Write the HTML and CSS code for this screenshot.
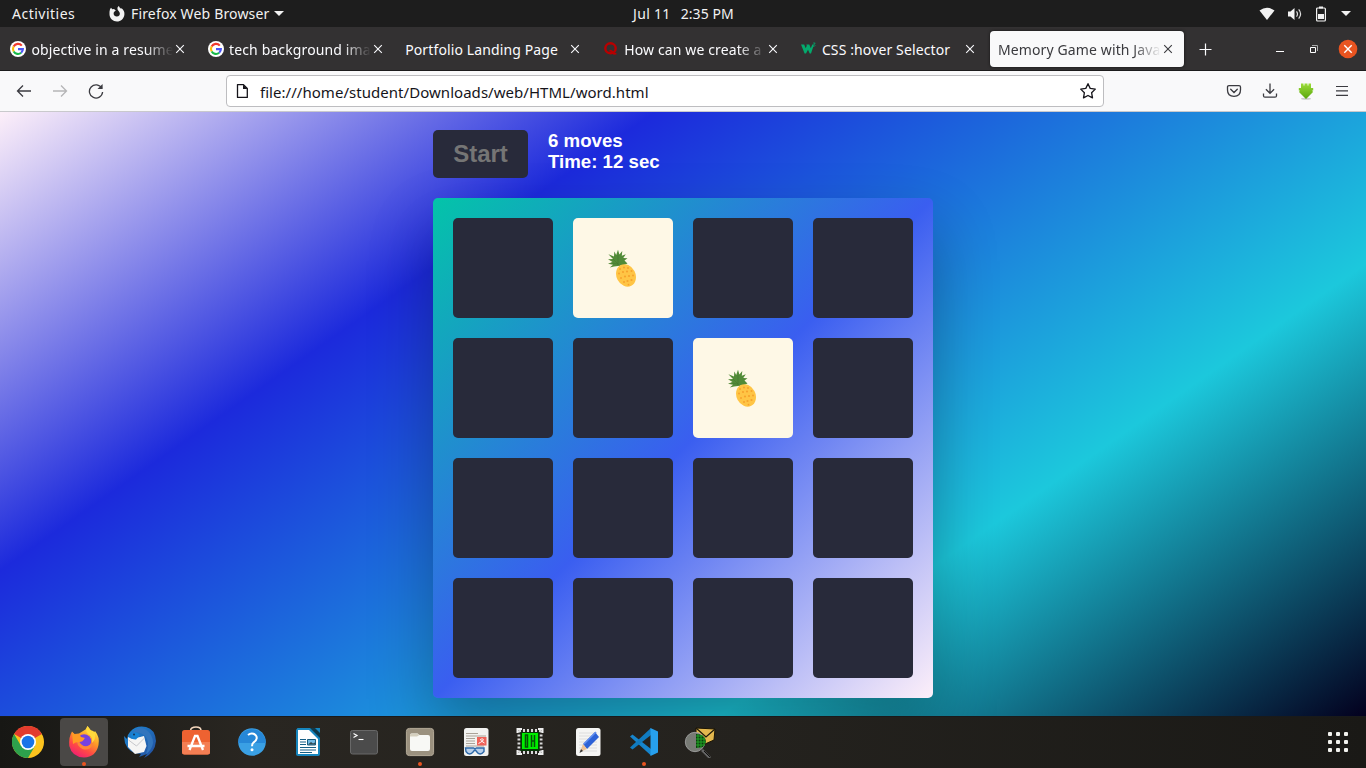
FILE: index.html
```html
<!DOCTYPE html>
<html lang="en">
<head>
<meta charset="utf-8">
<title>Memory Game with JavaScript</title>
<link rel="stylesheet" href="styles.css">
</head>
<body>
<svg width="0" height="0" class="defs">
  <defs>
    <symbol id="close" viewBox="0 0 10 10"><path d="M1.2 1.2 8.8 8.8M8.8 1.2 1.2 8.8" stroke="currentColor" stroke-width="1.1" fill="none"/></symbol>
    <symbol id="google" viewBox="0 0 16 16"><circle cx="8" cy="8" r="8" fill="#fff"/><g fill="none" stroke-width="2.1"><path d="M3.6 5.5A5 5 0 0 1 11.8 4.6" stroke="#f03a2e"/><path d="M3.7 10.5A5 5 0 0 1 3.6 5.5" stroke="#fbbc05"/><path d="M11.2 11.8A5 5 0 0 1 3.7 10.5" stroke="#18b848"/><path d="M8 8.1H12.9A5 5 0 0 1 11.2 11.8" stroke="#4b55f5"/></g></symbol>
    <symbol id="pineapple" viewBox="0 0 30 38"><path d="M11 17 7 17.6 2.8 18.4 6 15.8 1 14.8 5.5 13 1 10.2 6 10 1.4 5.2 7 7.5 7.3 2.5 9.2 6 11 .8 12.4 5.5 15.3 2 14.8 6.8 18.8 5.2 16.3 9 20.5 9.2 17.5 11.5 20.5 14.5 17 16Z" fill="#528b38"/><path d="m6 10 7 7M11 6v10M4 14l7 1" stroke="#43772f" stroke-width=".5"/><ellipse cx="19" cy="26.4" rx="9.5" ry="11.6" transform="rotate(-27 19 26.4)" fill="#ffc545"/><g fill="#f7a22c"><circle cx="13" cy="20" r="1"/><circle cx="17" cy="18.5" r="1"/><circle cx="21" cy="19" r="1"/><circle cx="12" cy="24.5" r="1"/><circle cx="16" cy="23" r="1.1"/><circle cx="20" cy="22.5" r="1.1"/><circle cx="24.5" cy="22" r="1"/><circle cx="14" cy="29" r="1"/><circle cx="18" cy="27.5" r="1.1"/><circle cx="22" cy="27" r="1.1"/><circle cx="26" cy="26.5" r="1"/><circle cx="17" cy="33" r="1"/><circle cx="20.5" cy="32" r="1.1"/><circle cx="24.5" cy="31" r="1.1"/><circle cx="21.5" cy="35.7" r=".9"/></g></symbol>
    <linearGradient id="ff" x1=".8" y1="0" x2=".25" y2="1"><stop offset="0" stop-color="#fff044"/><stop offset=".4" stop-color="#ff9b26"/><stop offset=".7" stop-color="#ff4a45"/><stop offset="1" stop-color="#ee1b76"/></linearGradient>
    <linearGradient id="tb" x1="0" y1="0" x2="1" y2="1"><stop offset="0" stop-color="#1b8ad8"/><stop offset="1" stop-color="#244c9b"/></linearGradient>
    <linearGradient id="dl" x1="0" y1="0" x2="0" y2="1"><stop offset="0" stop-color="#9bdc38"/><stop offset="1" stop-color="#59a60c"/></linearGradient>
  </defs>
</svg>

<header class="topbar">
  <div class="topbar-left">
    <span class="t-activities">Activities</span>
    <svg class="app-mark" width="16" height="16" viewBox="0 0 16 16"><path fill="#f2f2f2" d="M1 3.2 2 1.8 3.3 3.2 5 2.9 6.8 4.5 5 6C4 8.2 5.2 10.3 7.6 10.5 10 10.6 11.2 8.8 10.8 7 10.3 5.2 9 4.500 8.500 3.200 8.200 1.800 8.800.700 10 .100 10 1.400 11 2 12 2.800L12.700 2.200C14.800 4 15.700 6 15.400 8.700 14.800 12.800 11.700 15.500 8 15.500 4 15.500.700 12.500.500 8.500.300 6.500.500 4.700 1 3.200Z"/></svg>
    <span class="t-app">Firefox Web Browser</span>
    <i class="caret"></i>
  </div>
  <div class="clock"><span class="t-date">Jul 11</span><span class="t-time">2:35 PM</span></div>
  <div class="status">
    <svg width="16" height="14" viewBox="0 0 16 14"><path d="M.5 3.400Q8-2 15.500 3.400L8 13Z" fill="#f2f2f2"/></svg>
    <svg width="16" height="14" viewBox="0 0 16 14"><path d="M1 4.500h2.500L7.500 1v12L3.500 9.500H1Z" fill="#f2f2f2"/><path d="M9.500 4.300q2 2.700 0 5.400M11.700 2.400q3.800 4.600 0 9.200" fill="none" stroke="#ddd" stroke-width="1.200"/></svg>
    <svg width="12" height="16" viewBox="0 0 12 16"><path d="M4 .5h4v2H4zM3 8h6v5H3z" fill="#f2f2f2"/><rect x="1.600" y="2" width="8.800" height="13" rx="1" fill="none" stroke="#f2f2f2" stroke-width="1.200"/></svg>
    <i class="caret"></i>
  </div>
</header>

<nav class="tabstrip">
  <div class="tab"><svg class="fav"><use href="#google"/></svg><span class="label fade">objective in a resume</span><svg class="x"><use href="#close"/></svg></div>
  <div class="tab"><svg class="fav"><use href="#google"/></svg><span class="label fade">tech background image</span><svg class="x"><use href="#close"/></svg></div>
  <div class="tab"><span class="label">Portfolio Landing Page</span><svg class="x"><use href="#close"/></svg></div>
  <div class="tab"><svg class="fav" viewBox="0 0 16 16"><ellipse cx="7.500" cy="7.300" rx="5.200" ry="5" fill="none" stroke="#b80000" stroke-width="2.400"/><path d="M6.500 9.800Q8.900 9.300 10 11.800 10.800 13.400 13.400 12.500" fill="none" stroke="#b80000" stroke-width="1.800"/></svg><span class="label fade">How can we create a b</span><svg class="x"><use href="#close"/></svg></div>
  <div class="tab"><svg class="fav" viewBox="0 0 16 16"><path d="M1 3.500h3.200l1.500 3.800 1.100-2.500L6.300 3.500h3l1.500 3.800 1.500-3.800H14l-3 9H9.700L8 8.800l-2 3.700H4.600Z" fill="#04aa6d"/><path d="M13.200 2h2l-1 1.300q1.700 1 0 2.100l-1.100-.3" fill="none" stroke="#04aa6d" stroke-width=".8"/></svg><span class="label">CSS :hover Selector</span><svg class="x"><use href="#close"/></svg></div>
  <div class="tab current"><span class="label fade">Memory Game with JavaS</span><svg class="x"><use href="#close"/></svg></div>
  <svg class="newtab" width="13" height="13" viewBox="0 0 13 13"><path d="M6.500.5v12M.5 6.500h12" stroke="#fbfbfe" stroke-width="1.200"/></svg>
  <div class="window-controls">
    <svg width="10" height="10" viewBox="0 0 10 10"><path d="M1 7.500h8" stroke="#fff"/></svg>
    <svg width="10" height="10" viewBox="0 0 10 10"><path d="M1.500 3.500h5v5h-5z" fill="none" stroke="#fff"/><path d="M3 1.500h5.500V7" fill="none" stroke="#aaa"/></svg>
    <svg width="20" height="20" viewBox="0 0 20 20"><circle cx="10" cy="10" r="9.300" fill="#e95420"/><path d="m6.300 6.300 7.400 7.400m0-7.400-7.400 7.400" stroke="#fff" stroke-width="1.400"/></svg>
  </div>
</nav>

<div class="toolbar">
  <div class="nav-buttons">
    <svg width="16" height="16" viewBox="0 0 16 16"><path d="M15 8H1.500M7 2.500 1.500 8 7 13.500" fill="none" stroke="#3b3b40" stroke-width="1.300"/></svg>
    <svg width="16" height="16" viewBox="0 0 16 16"><path d="M1 8h13.500M9 2.500 14.500 8 9 13.500" fill="none" stroke="#b5b5b6" stroke-width="1.300"/></svg>
    <svg width="16" height="16" viewBox="0 0 16 16"><path d="M13.800 5.200A6.600 6.600 0 1 0 14.600 9" fill="none" stroke="#3b3b40" stroke-width="1.300"/><path d="M14.600 1v5H9.500Z" fill="#3b3b40"/></svg>
  </div>
  <div class="urlbar">
    <svg width="14" height="16" viewBox="0 0 14 16"><path d="M2.500 1.600h6L12.300 5.400v9H2.500Z" fill="none" stroke="#15141a" stroke-width="1.300" stroke-linejoin="round"/><path d="M8 1.500V6h4.500Z" fill="#15141a"/></svg>
    <span class="t-url">file:///home/student/Downloads/web/HTML/word.html</span>
    <svg class="star" width="18" height="18" viewBox="0 0 18 18"><path d="m9 1.700 2.200 4.700 5.100.7-3.700 3.600.9 5.200L9 13.500l-4.500 2.400.9-5.200L1.700 7.100l5.100-.7Z" fill="none" stroke="#15141a" stroke-width="1.300" stroke-linejoin="round"/></svg>
  </div>
  <div class="tools">
    <svg width="16" height="16" viewBox="0 0 16 16"><path d="M3 2.600h10q1.500 0 1.500 1.500v3Q14.500 13.400 8 13.400T1.500 7.100v-3Q1.500 2.600 3 2.600Z" fill="none" stroke="#3b3b40" stroke-width="1.300"/><path d="m4.700 6.300 3.300 3.200 3.300-3.200" fill="none" stroke="#3b3b40" stroke-width="1.300" stroke-linecap="round"/></svg>
    <svg width="16" height="16" viewBox="0 0 16 16"><path d="M8 .5v9.800M3.900 6.200 8 10.300 12.100 6.200M1.500 10.500v2.200q0 1.500 1.500 1.500h10q1.500 0 1.500-1.500v-2.200" fill="none" stroke="#3b3b40" stroke-width="1.300"/></svg>
    <svg width="16" height="17" viewBox="0 0 16 17"><ellipse cx="8" cy="15.800" rx="5" ry="1" fill="#ccc"/><path d="M3 .5h2.500v2h1v-2h3v2h1v-2H13V5h2.200v2.500H14L15 9 8 16 1 9l1-1.500H.8V5H3Z" fill="url(#dl)"/></svg>
    <svg width="16" height="16" viewBox="0 0 16 16"><path d="M2 3.500h12M2 7.900h12M2 12.400h12" stroke="#3b3b40" stroke-width="1.200"/></svg>
  </div>
</div>

<main class="page">
  <div class="game">
    <div class="controls">
      <button class="start" disabled>Start</button>
      <div class="stats"><div>6 moves</div><div>Time: 12 sec</div></div>
    </div>
    <div class="board">
      <div class="card"></div><div class="card flipped"><svg width="30" height="38"><use href="#pineapple"/></svg></div><div class="card"></div><div class="card"></div>
      <div class="card"></div><div class="card"></div><div class="card flipped"><svg width="30" height="38"><use href="#pineapple"/></svg></div><div class="card"></div>
      <div class="card"></div><div class="card"></div><div class="card"></div><div class="card"></div>
      <div class="card"></div><div class="card"></div><div class="card"></div><div class="card"></div>
    </div>
  </div>
</main>

<footer class="dock">
  <div class="slot"><svg viewBox="0 0 32 32"><circle cx="16" cy="16" r="16" fill="#fcc31e"/><path d="M16 16 2.100 8A16 16 0 0 1 29.900 8Z" fill="#e33b2e"/><path d="M2.100 8A16 16 0 0 0 16 32L22.900 20 16 16 9.100 20Z" fill="#2da14c"/><circle cx="16" cy="16" r="8" fill="#fff"/><circle cx="16" cy="16" r="6.300" fill="#1a73e8"/></svg></div>
  <div class="slot running active"><svg viewBox="0 0 32 32"><path d="M4 5.500 6.500 8 11 7.500 17.500 3.500 19.500 0 22.500 4 25 8 27 5Q32 11 30.500 19 28 31 16 31.500 4 31 1.300 20 .5 11 4 5.500Z" fill="url(#ff)"/><circle cx="16.200" cy="15.300" r="7" fill="#7542df"/><path d="M9 13 16 13Q15 16 11.500 16 14 21 19.500 20 25 18 23 11L20 9Q28 10 25 19 21 25 14.500 23 8 20 9 13Z" fill="#ff8634"/><path d="M4 6 7 8.500 11 8 13 11 17 12 15 14 11 16Q7 16 5 18Z" fill="#ff9b23"/><path d="M19.500 0Q17 5 20 8 25 11 24 17 28 14 27 7L30 12Q28 5 22.500 4Z" fill="#ffd93c"/></svg></div>
  <div class="slot"><svg viewBox="0 0 32 32"><path d="M6 6Q12-1 22 1 31 3 32 15 31 27 20 32L23 28 15 31 17 28Q5 28 1 17L0 10 3 13Q3 9 6 6Z" fill="url(#tb)"/><path d="M8 7Q13 0 21 3 29 8 29 17 28 24 22 28 26 18 22 11 17 5 8 7Z" fill="#3275bd"/><path d="M4 11 8 13 20 10 22.500 20 20 26 11 28 4 21Z" fill="#f5f5f4"/><path d="m4.500 14 8 6 8-8" fill="none" stroke="#c6c7cb"/><path d="M7 8q4-4 9 1l-4 4.500q-6 0-5-5.500Z" fill="#1784d5"/><circle cx="10" cy="8.500" r="1" fill="#173357"/></svg></div>
  <div class="slot"><svg viewBox="0 0 32 32"><path d="M10.500 6V4.500Q11 1 16 1t5 3.500V6" fill="none" stroke="#f4d7bd" stroke-width="1.600"/><rect x="2" y="4" width="28" height="24.500" rx="2.500" fill="#ee6231"/><path d="M2 16h28v10q0 2.500-2.500 2.500h-23Q2 28.500 2 26Z" fill="#f47e53"/><path d="m9.500 24 5.500-14h2.500L23 24M7.500 20h17" fill="none" stroke="#fff" stroke-width="2.300"/></svg></div>
  <div class="slot"><svg viewBox="0 0 32 32"><circle cx="16" cy="16" r="13.800" fill="#3aa0e4"/><path d="M2.200 17a13.800 13.800 0 0 1 27.600 0Z" fill="#2687d7"/><path d="M12 9q2.500-2 5.500-1.200 3.500 1.200 3.200 4.500-.3 2.200-3 4-1.700 1.300-1.700 4" fill="none" stroke="#fff" stroke-width="2"/><circle cx="16" cy="23.800" r="1.500" fill="#fff"/></svg></div>
  <div class="slot"><svg viewBox="0 0 32 32"><path d="M5.500 2H28v26q0 2-2 2H6q-2 0-2-2V4Z" fill="#1685bd"/><path d="M18 2h10v10Z" fill="#103848"/><path d="M23 2h5v5Z" fill="#1685bd"/><path d="M6 4h11l9 9v15H6Z" fill="#fff"/><path d="M8 13.500h6M8 16h6M8 18.500h6M8 21.500h16M8 24h16M8 26.500h12" stroke="#165f87"/><path d="M15.500 13.500h8v5.500h-8Z" fill="#6fb8e4" stroke="#175b7c"/><path d="m16 18.500 3-2.500 2 1.500 2-1v2Z" fill="#304852"/></svg></div>
  <div class="slot"><svg viewBox="0 0 32 32"><rect x="2.500" y="4.500" width="27" height="23.500" rx="2" fill="#4b4b4b" stroke="#686868"/><path d="m5.500 7.500 3.500 2-3.500 2" fill="none" stroke="#fff" stroke-width="1.200"/><path d="M10.500 13.500h5" stroke="#fff" stroke-width="1.100"/></svg></div>
  <div class="slot running"><svg viewBox="0 0 32 32"><rect x="2.400" y="2.400" width="27.200" height="27.200" rx="3" fill="#9b917f" stroke="#b4aa98"/><path d="M6 9q0-1.500 1.500-1.500h6l2 1.500H24q2 0 2 2V23q0 2-2 2H8q-2 0-2-2Z" fill="#f8f8f5"/><path d="M6 9q0-1.500 1.500-1.500h6l2 1.500L13 10.500H6Z" fill="#d5cfbe"/></svg></div>
  <div class="slot"><svg viewBox="0 0 32 32"><rect x="4" y="2" width="24.500" height="28" rx="2.500" fill="#f2f2f0"/><path d="M6 7.500h12M6 10h20M6 12.500h9M6 15h9M6 17.500h9M6 20h18" stroke="#aaa298"/><rect x="17" y="11" width="9.500" height="8.500" fill="#ef6259"/><path d="M18.500 17.500q2-1 4-2.500 2-2.500-1-2t3 4" fill="none" stroke="#fff"/><path d="M5.500 22h8l1.500.8 1.500-.8H24v3.500q-4 5-7.500 0L15 23.500l-1.500 2q-4 5-7.500 0Z" fill="#b9d0eb" stroke="#2e69a9" stroke-width="1.400"/></svg></div>
  <div class="slot chip"><svg viewBox="0 0 32 32"><path d="M5 4.500h22M5 26.500h22M5 4.500v22M27 4.500v22" stroke="#d9d9d9" stroke-width="3" stroke-dasharray="2 2" fill="none"/><path d="M3.500 7V3H8M24 3h4.500v4M28.500 24v4H24M8 28H3.500v-4" stroke="#eee" stroke-width="2" fill="none"/><path d="M6.500 6h19v19h-19Z" fill="#063806"/><path d="M8 7h16v16H8Z" fill="#0e0"/><path d="M11.500 9v12h2V9ZM17.500 9v6h3V9M17.500 21v-6M20.500 15v6" stroke="#064f08" stroke-width="1.500" fill="none"/></svg></div>
  <div class="slot"><svg viewBox="0 0 32 32"><rect x="4" y="2" width="24.500" height="28" rx="2.500" fill="#f5f5f3"/><path d="M7 7h18M7 10h18M7 13h18M7 16h18M7 19h18M7 22h18M7 25h18" stroke="#ddd"/><path d="m11 18 12-12 4 5-12 12Z" fill="#2d62d6"/><path d="m12 18 12-12" stroke="#6390f0" stroke-width="1.500"/><path d="m11 18 4 5-7 3Z" fill="#edc195"/><path d="m9 23-1.500 4L11 25Z" fill="#333"/></svg></div>
  <div class="slot running"><svg viewBox="0 0 32 32"><path d="m2 10.500 2.500-2L23 23v6.500Z" fill="#1685cd"/><path d="m2 21.500 2.500 2L23 9V2Z" fill="#107bc0"/><path d="m22.500 2 7.500 3.500v21L22.500 30Z" fill="#27a0ed"/></svg></div>
  <div class="slot"><svg viewBox="0 0 32 32"><path d="m12 2 19 1-1 11-9 4-9-7Z" fill="#e4b84e" stroke="#1b1404"/><path d="m12 2 10 9 9-8M18 12l3 4" fill="none" stroke="#201a0b" stroke-width="1.300"/><path d="m18 24 8 8" stroke="#666" stroke-width="2.600"/><path d="m20 25 6 6" stroke="#111"/><circle cx="11" cy="16" r="9.700" fill="#787b75" stroke="#aaa" stroke-width=".8"/><path d="M12 8q9 0 10 8l-3 5-7 1Z" fill="#0c3c0c"/><path d="M12 10h7M12 13h9M12 16h10M12 19h8M14 8v14M17 9v13M20 11v9" stroke="#20a526"/></svg></div>
  <div class="apps"><i></i><i></i><i></i><i></i><i></i><i></i><i></i><i></i><i></i></div>
</footer>
</body>
</html>
```
FILE: styles.css
```css
* { box-sizing: border-box; }
body { margin: 0; width: 1366px; height: 768px; overflow: hidden; display: flex; flex-direction: column; font: 14px/20px "Noto Sans", sans-serif; background: #1b1a17; }
svg { display: block; flex: none; }
.defs { position: absolute; }
span { white-space: nowrap; }

.topbar { height: 27px; flex: none; background: #1d1d1d; color: #f2f2f2; display: grid; grid-template-columns: 1fr auto 1fr; align-items: center; }
.topbar-left { display: flex; align-items: center; padding-left: 12px; }
.t-activities { width: 97px; letter-spacing: .5px; }
.t-app { width: 143px; margin-left: 6px; letter-spacing: .16px; }
.caret { width: 0; height: 0; border: 5px solid transparent; border-top-color: #f2f2f2; border-bottom: 0; }
.clock { display: flex; gap: 10px; padding-left: 1px; letter-spacing: .1px; position: relative; }
.t-date { letter-spacing: .3px; }
.status { display: flex; justify-content: flex-end; align-items: center; gap: 12px; padding-right: 15px; }
.status .caret { margin-left: 2px; }

.tabstrip { height: 44px; flex: none; background: #333132; border-bottom: 1px solid #1c1b1c; color: #fbfbfe; display: flex; align-items: center; padding-left: 2px; }
.tab { width: 194px; margin-right: 3.6px; height: 36px; padding: 0 11px 0 8px; display: flex; align-items: center; border-radius: 4px; }
.tab.current { background: #f9f9fa; color: #3a3a3e; box-shadow: 0 0 3px #111; }
.fav { width: 16px; height: 16px; margin-right: 5.5px; }
.label { flex: 1; min-width: 0; overflow: hidden; padding-top: 2px; letter-spacing: .12px; }
.fade { -webkit-mask-image: linear-gradient(to right, #000 calc(100% - 28px), transparent); mask-image: linear-gradient(to right, #000 calc(100% - 28px), transparent); }
.x { width: 10px; height: 10px; margin-left: 2px; }
.newtab { margin: 2px 0 0 11px; }
.window-controls { margin-left: auto; display: flex; align-items: center; gap: 24px; padding-right: 8px; }
.window-controls svg:last-child { margin-left: -5px; }

.toolbar { height: 41px; flex: none; background: #f9f9fa; border-bottom: 1px solid #c9c9cc; display: flex; align-items: center; }
.nav-buttons { width: 226px; padding-left: 16px; display: flex; gap: 20px; }
.urlbar { width: 878px; height: 32px; border: 1px solid #bdbdc0; border-radius: 4px; background: #fff; display: flex; align-items: center; padding: 0 6px 0 8px; color: #15141a; }
.t-url { margin-left: 11px; padding-top: 1px; font-size: 15px; letter-spacing: .04px; }
.star { margin-left: auto; }
.tools { display: flex; gap: 20px; margin-left: 122px; }

.page { height: 604px; flex: none; overflow: hidden; background: linear-gradient(145deg, #fdeff9 0%, #1c2adc 29.4%, #1cc8dc 71%, #03001e 100%); font-family: "Liberation Sans", Arial, sans-serif; }
.game { width: 500px; margin: 0 auto; padding-top: 18px; }
.controls { display: flex; gap: 20px; margin-bottom: 20px; }
.start { width: 95px; height: 48px; padding: 0; border: 0; border-radius: 5px; background: #282a3a; color: #757575; font: bold 24px "Liberation Sans", Arial, sans-serif; }
.stats { color: #fff; font-size: 18.667px; line-height: 21px; font-weight: bold; }
.board { height: 500px; padding: 20px; border-radius: 5px; display: grid; grid-template-columns: repeat(4, 100px); grid-template-rows: repeat(4, 100px); gap: 20px; background: linear-gradient(135deg, #03c4a9 0%, #3a5ef0 50%, #fdeff9 100%); box-shadow: 0 32px 64px rgba(0, 0, 0, .3); }
.card { border-radius: 5px; background: #282a3a; display: flex; align-items: center; justify-content: center; }
.card.flipped { background: #fef8e6; padding: 0 3px 1px 0; }

.dock { height: 52px; flex: none; display: flex; align-items: center; background: linear-gradient(90deg, #171714, #292621 18%, #24221e 55%, #1a1916); border-top: 1px solid #191a1b; }
.slot { width: 48px; height: 48px; margin: 0 4px 1px; display: flex; align-items: center; justify-content: center; border-radius: 4px; position: relative; }
.slot svg { width: 32px; height: 32px; }
.slot.active { background: #4a4846; }
.slot.running::after { content: ""; position: absolute; left: 22px; bottom: 0; width: 4px; height: 4px; border-radius: 2px; background: #e95420; }
.slot.chip { padding-right: 4px; }
.apps { margin-left: auto; margin-right: 18px; margin-bottom: 1px; display: grid; grid-template-columns: repeat(3, 4px); gap: 4px; }
.apps i { height: 4px; border-radius: 1px; background: #f2f2ee; }
```
